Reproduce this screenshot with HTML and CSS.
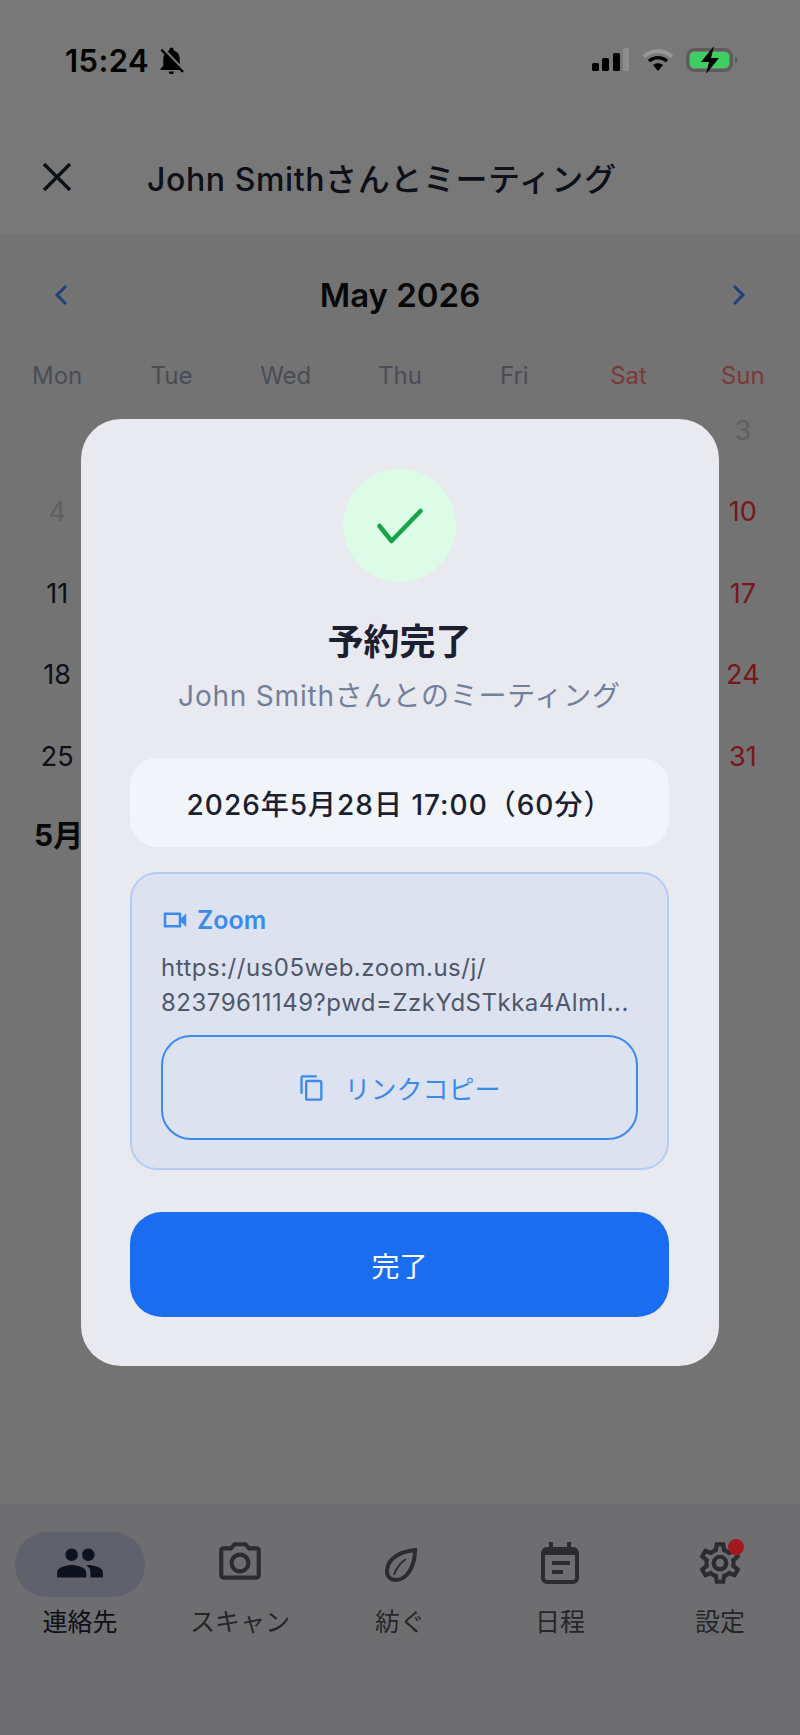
FILE: index.html
```html
<!DOCTYPE html>
<html lang="ja">
  <head>
    <meta charset="UTF-8" />
    <meta name="viewport" content="width=device-width, initial-scale=1.0" />
    <title>予約完了</title>
    <link rel="stylesheet" href="styles.css">
  </head>
  <body>
    <div class="screen">
      <header class="top-bar">
        <div class="title-row">
          <svg class="close-icon" width="30" height="30" viewBox="0 0 30 30"><path d="M2 2l26 26M28 2L2 28" /></svg>
          <h1 class="page-title">John Smithさんとミーティング</h1>
        </div>
      </header>

      <main class="calendar">
        <div class="month-nav">
          <svg class="chevron" width="14" height="22" viewBox="0 0 14 22"><path d="M12 2L3 11l9 9" /></svg>
          <div class="month-name">May 2026</div>
          <svg class="chevron" width="14" height="22" viewBox="0 0 14 22"><path d="M2 2l9 9-9 9" /></svg>
        </div>
        <div class="week-head">
          <span>Mon</span><span>Tue</span><span>Wed</span><span>Thu</span><span>Fri</span>
          <span class="weekend">Sat</span><span class="weekend">Sun</span>
        </div>
        <!-- the cells under the dialog stay empty -->
        <div class="days">
          <span></span><span></span><span></span><span></span><span></span><span></span><span class="past">3</span>
          <span class="past">4</span><span></span><span></span><span></span><span></span><span></span><span class="holiday">10</span>
          <span>11</span><span></span><span></span><span></span><span></span><span></span><span class="holiday">17</span>
          <span>18</span><span></span><span></span><span></span><span></span><span></span><span class="holiday">24</span>
          <span>25</span><span></span><span></span><span></span><span></span><span></span><span class="holiday">31</span>
        </div>
        <h2 class="month-section">5月</h2>
      </main>

      <nav class="tab-bar">
        <div class="tab active">
          <div class="tab-icon">
            <svg width="50" height="50" viewBox="0 0 24 24"><path d="M16 11c1.66 0 2.99-1.34 2.99-3S17.66 5 16 5c-1.66 0-3 1.34-3 3s1.34 3 3 3zm-8 0c1.66 0 2.99-1.34 2.99-3S9.66 5 8 5C6.34 5 5 6.34 5 8s1.34 3 3 3zm0 2c-2.33 0-7 1.17-7 3.5V19h14v-2.5c0-2.33-4.67-3.5-7-3.5zm8 0c-.29 0-.62.02-.97.05 1.16.84 1.97 1.97 1.97 3.45V19h6v-2.5c0-2.33-4.67-3.5-7-3.5z" /></svg>
          </div>
          <span>連絡先</span>
        </div>
        <div class="tab">
          <div class="tab-icon">
            <svg width="50" height="50" viewBox="0 0 24 24"><path d="M14.12 4l1.83 2H20v12H4V6h4.05l1.83-2h4.24M15 2H9L7.17 4H4c-1.1 0-2 .9-2 2v12c0 1.1.9 2 2 2h16c1.1 0 2-.9 2-2V6c0-1.1-.9-2-2-2h-3.17L15 2zm-3 7c1.65 0 3 1.35 3 3s-1.35 3-3 3-3-1.35-3-3 1.35-3 3-3m0-2c-2.76 0-5 2.24-5 5s2.24 5 5 5 5-2.24 5-5-2.24-5-5-5z" /></svg>
          </div>
          <span>スキャン</span>
        </div>
        <div class="tab">
          <div class="tab-icon">
            <svg class="line-icon" width="50" height="50" viewBox="0 0 50 50"><path d="M40 12C28 13 13 19 12 32c-.5 7 4 10 9 10C32 42 40 28 40 12z" /><path class="thin" d="M19 37c2-6 6-12 12-16" /></svg>
          </div>
          <span>紡ぐ</span>
        </div>
        <div class="tab">
          <div class="tab-icon">
            <svg class="line-icon" width="50" height="50" viewBox="0 0 50 50"><rect x="8" y="11" width="34" height="33" rx="4" /><path d="M16 4v7M34 4v7M8 15h34M17 25h18M17 34h11" /></svg>
          </div>
          <span>日程</span>
        </div>
        <div class="tab">
          <div class="tab-icon">
            <svg width="50" height="50" viewBox="0 0 24 24"><path d="M19.43 12.98c.04-.32.07-.64.07-.98 0-.34-.03-.66-.07-.98l2.11-1.65c.19-.15.24-.42.12-.64l-2-3.46c-.09-.16-.26-.25-.44-.25-.06 0-.12.01-.17.03l-2.49 1c-.52-.4-1.08-.73-1.69-.98l-.38-2.65C14.46 2.18 14.25 2 14 2h-4c-.25 0-.46.18-.49.42l-.38 2.65c-.61.25-1.17.59-1.69.98l-2.49-1c-.06-.02-.12-.03-.18-.03-.17 0-.34.09-.43.25l-2 3.46c-.13.22-.07.49.12.64l2.11 1.65c-.04.32-.07.65-.07.98 0 .33.03.66.07.98l-2.11 1.65c-.19.15-.24.42-.12.64l2 3.46c.09.16.26.25.44.25.06 0 .12-.01.17-.03l2.49-1c.52.4 1.08.73 1.69.98l.38 2.65c.03.24.24.42.49.42h4c.25 0 .46-.18.49-.42l.38-2.65c.61-.25 1.17-.59 1.69-.98l2.49 1c.06.02.12.03.18.03.17 0 .34-.09.43-.25l2-3.46c.12-.22.07-.49-.12-.64l-2.11-1.65zm-1.98-1.71c.04.31.05.52.05.73 0 .21-.02.43-.05.73l-.14 1.13.89.7 1.08.84-.7 1.21-1.27-.51-1.04-.42-.9.68c-.43.32-.84.56-1.25.73l-1.06.43-.16 1.13-.2 1.35h-1.4l-.19-1.35-.16-1.13-1.06-.43c-.43-.18-.83-.41-1.23-.71l-.91-.7-1.06.43-1.27.51-.7-1.21 1.08-.84.89-.7-.14-1.13c-.03-.31-.05-.54-.05-.74s.02-.43.05-.73l.14-1.13-.89-.7-1.08-.84.7-1.21 1.27.51 1.04.42.9-.68c.43-.32.84-.56 1.25-.73l1.06-.43.16-1.13.2-1.35h1.39l.19 1.35.16 1.13 1.06.43c.43.18.83.41 1.23.71l.91.7 1.06-.43 1.27-.51.7 1.21-1.07.85-.89.7.14 1.13zM12 8c-2.21 0-4 1.79-4 4s1.79 4 4 4 4-1.79 4-4-1.79-4-4-4zm0 6c-1.1 0-2-.9-2-2s.9-2 2-2 2 .9 2 2-.9 2-2 2z" /></svg>
            <div class="badge"></div>
          </div>
          <span>設定</span>
        </div>
      </nav>
    </div>

    <div class="scrim">
      <div class="modal">
        <div class="check-circle">
          <svg width="113" height="113" viewBox="0 0 113 113"><path d="M36.5 57l12 15 29-30" /></svg>
        </div>
        <h2 class="modal-title">予約完了</h2>
        <p class="modal-sub">John Smithさんとのミーティング</p>
        <div class="date-box">2026年5月28日 17:00（60分）</div>
        <div class="zoom-card">
          <div class="zoom-head">
            <svg width="30" height="30" viewBox="0 0 24 24"><path d="M15 8v8H5V8h10m1-2H4c-.55 0-1 .45-1 1v10c0 .55.45 1 1 1h12c.55 0 1-.45 1-1v-3.5l4 4v-11l-4 4V7c0-.55-.45-1-1-1z" /></svg>
            <span>Zoom</span>
          </div>
          <div class="zoom-url">https://us05web.zoom.us/j/<br>82379611149?pwd=ZzkYdSTkka4AlmI...</div>
          <button class="copy-btn">
            <svg width="28" height="28" viewBox="0 0 24 24"><path d="M16 1H4c-1.1 0-2 .9-2 2v14h2V3h12V1zm3 4H8c-1.1 0-2 .9-2 2v14c0 1.1.9 2 2 2h11c1.1 0 2-.9 2-2V7c0-1.1-.9-2-2-2zm0 16H8V7h11v14z" /></svg>
            <span>リンクコピー</span>
          </button>
        </div>
        <button class="done-btn">完了</button>
      </div>
    </div>

    <div class="status-bar">
      <div class="status-left">
        <span class="clock">15:24</span>
        <svg width="33" height="33" viewBox="0 0 24 24"><path d="M20 18.69L7.84 6.14 5.27 3.49 4 4.76l2.8 2.8v.01c-.52.99-.8 2.16-.8 3.42v5l-2 2v1h13.73l2 2L21 19.72l-1-1.03zM12 22c1.11 0 2-.89 2-2h-4c0 1.11.89 2 2 2zm6-7.32V11c0-3.08-1.64-5.64-4.5-6.32V4c0-.83-.67-1.5-1.5-1.5s-1.5.67-1.5 1.5v.68c-.15.03-.29.08-.42.12-.1.03-.2.07-.3.11h-.01c-.2.08-.4.17-.59.27-.01 0-.01.01-.02.01L18 14.68z" /></svg>
      </div>
      <div class="status-right">
        <svg width="38" height="24" viewBox="0 0 38 24">
          <rect x="0" y="15" width="7" height="8" rx="1.5" />
          <rect x="10" y="10" width="7" height="13" rx="1.5" />
          <rect x="21" y="5" width="7" height="18" rx="1.5" />
          <rect x="31" y="0" width="6" height="23" rx="1.5" fill="#8e8e8e" />
        </svg>
        <svg width="32" height="24" viewBox="0 0 32 24">
          <path d="M2 8.5C10 1.500 22 1.500 30 8.500" fill="none" stroke="#979797" stroke-width="4" />
          <path d="M7 13c5.500-4.500 12.500-4.500 18 0" fill="none" stroke="#000" stroke-width="3.500" />
          <path d="M11 17c3-2.500 7-2.500 10 0l-5 6z" />
        </svg>
        <svg width="52" height="28" viewBox="0 0 52 28">
          <rect x="1.500" y="3.500" width="44" height="21" rx="7" fill="none" stroke="#5c5c5c" stroke-width="3" />
          <rect x="4" y="6" width="39" height="16" rx="4.500" fill="#3fcf60" />
          <path d="M49 10.500c1.500.5 2.500 2 2.500 3.500s-1 3-2.500 3.500z" fill="#5c5c5c" />
          <path d="M28 0L15 16h8l-3 12 13-16h-8z" />
        </svg>
      </div>
    </div>
  </body>
</html>
```

FILE: styles.css
```css
* {
  box-sizing: border-box;
}

body {
  margin: 0;
  font-family: Inter, "Noto Sans CJK JP", sans-serif;
  color: #111;
}

.screen {
  display: flex;
  flex-direction: column;
  height: 1735px;
  background: #e6e6e7;
}

/* top */

.status-bar {
  position: absolute;
  top: 0;
  left: 0;
  width: 100%;
  height: 120px;
  display: flex;
  justify-content: space-between;
  align-items: center;
  padding: 0 62px 0 65px;
}

.status-left {
  display: flex;
  align-items: center;
  gap: 6px;
}

.clock {
  font-size: 31px;
  font-weight: 600;
  letter-spacing: 0.4px;
  color: #000;
}

.status-right {
  display: flex;
  align-items: center;
  gap: 12px;
}

.top-bar {
  height: 234px;
  padding-top: 120px;
  background: #f1f1f1;
}

.title-row {
  display: flex;
  align-items: center;
  height: 114px;
  padding-left: 42px;
  gap: 75px;
}

.close-icon path {
  fill: none;
  stroke: #1b2030;
  stroke-width: 3.5;
}

.page-title {
  margin: 0;
  font-size: 32px;
  font-weight: 500;
  letter-spacing: 0.6px;
  color: #1b2030;
}

/* calendar */

.month-nav {
  display: flex;
  justify-content: space-between;
  align-items: center;
  height: 122px;
  padding: 0 54px;
}

.chevron path {
  fill: none;
  stroke: #3b82f6;
  stroke-width: 3;
}

.month-name {
  font-size: 33px;
  font-weight: 600;
}

.week-head,
.days {
  display: grid;
  grid-template-columns: repeat(7, 1fr);
  text-align: center;
}

.week-head {
  height: 34px;
  margin-top: 2px;
  align-items: center;
  font-size: 24px;
  color: #959baa;
}

.week-head .weekend {
  color: #f87171;
}

.days {
  margin-top: 0.5px;
  grid-auto-rows: 75px;
  row-gap: 6.5px;
  align-items: center;
  font-size: 27px;
  color: #1b2030;
}

.days .past {
  color: #c0c0c4;
}

.days .holiday {
  color: #f03038;
}

.month-section {
  margin: 0;
  padding: 24px 0 0 34px;
  font-size: 30px;
  line-height: 34px;
  font-weight: 700;
}

/* tab bar */

.tab-bar {
  margin-top: auto;
  height: 232px;
  padding-top: 28px;
  display: grid;
  grid-template-columns: repeat(5, 1fr);
  align-items: start;
  background: #dcdce0;
  border-top: 1px solid #e0e0e2;
}

.tab {
  display: flex;
  flex-direction: column;
  align-items: center;
  gap: 5px;
  font-size: 25px;
  color: #4a4d55;
}

.tab-icon {
  position: relative;
  display: flex;
  justify-content: center;
  align-items: center;
  width: 130px;
  height: 65px;
  border-radius: 32px;
}

.tab-icon svg {
  margin-top: -3px;
  fill: #55585f;
}

.tab.active {
  color: #1b2030;
}

.tab.active .tab-icon {
  background: #bec4d8;
}

.tab.active .tab-icon svg {
  fill: #1b2540;
}

.tab-icon .line-icon {
  fill: none;
  stroke: #55585f;
  stroke-width: 4;
}

.line-icon .thin {
  stroke-width: 2;
}

.badge {
  position: absolute;
  z-index: 1;
  top: 7px;
  left: 73px;
  width: 16px;
  height: 16px;
  border-radius: 50%;
  background: #a3191e;
}

/* modal */

.scrim {
  position: absolute;
  top: 0;
  left: 0;
  width: 100%;
  height: 1735px;
  padding-top: 419px;
  display: flex;
  justify-content: center;
  align-items: flex-start;
  background: rgba(0, 0, 0, 0.5);
}

.modal {
  width: 638px;
  height: 947px;
  padding: 50px 50px 49px 49px;
  display: flex;
  flex-direction: column;
  align-items: center;
  background: #e9e9f0;
  border-radius: 40px;
}

.check-circle {
  width: 113px;
  height: 113px;
  border-radius: 50%;
  background: #dcfce7;
}

.check-circle path {
  fill: none;
  stroke: #16a34a;
  stroke-width: 4.5;
  stroke-linecap: round;
  stroke-linejoin: round;
}

.modal-title {
  margin: 38px 0 0;
  font-size: 36px;
  line-height: 44px;
  font-weight: 700;
  color: #1b2030;
}

.modal-sub {
  margin: 15px 0 0;
  font-size: 28px;
  line-height: 34px;
  letter-spacing: 0.8px;
  color: #71809a;
}

.date-box {
  width: 100%;
  height: 89px;
  margin-top: 45px;
  display: flex;
  justify-content: center;
  align-items: center;
  font-size: 28px;
  font-weight: 500;
  letter-spacing: 1px;
  color: #1b2030;
  background: #f1f5f9;
  border-radius: 27px;
}

.zoom-card {
  width: 100%;
  height: 298px;
  margin-top: 25px;
  padding: 31px 29px 0;
  background: #dde2f1;
  border: 2px solid #b3cdf2;
  border-radius: 27px;
}

.zoom-head {
  display: flex;
  align-items: center;
  gap: 7px;
  margin-left: -1px;
  font-size: 25px;
  font-weight: 600;
  color: #3b8bed;
}

.zoom-head svg {
  fill: #3b8bed;
}

.zoom-url {
  margin-top: 15px;
  font-size: 24px;
  line-height: 35px;
  letter-spacing: 0.5px;
  white-space: nowrap;
  color: #4f5869;
}

.copy-btn {
  width: 100%;
  height: 105px;
  margin-top: 15px;
  display: flex;
  justify-content: center;
  align-items: center;
  gap: 18px;
  font-family: inherit;
  font-size: 26px;
  color: #3b8bed;
  background: none;
  border: 2px solid #3b8bed;
  border-radius: 30px;
}

.copy-btn svg {
  fill: #3b8bed;
}

.done-btn {
  width: 100%;
  height: 105px;
  margin-top: 42px;
  font-family: inherit;
  font-size: 28px;
  color: #fff;
  background: #1a6df0;
  border: none;
  border-radius: 32px;
}
```
